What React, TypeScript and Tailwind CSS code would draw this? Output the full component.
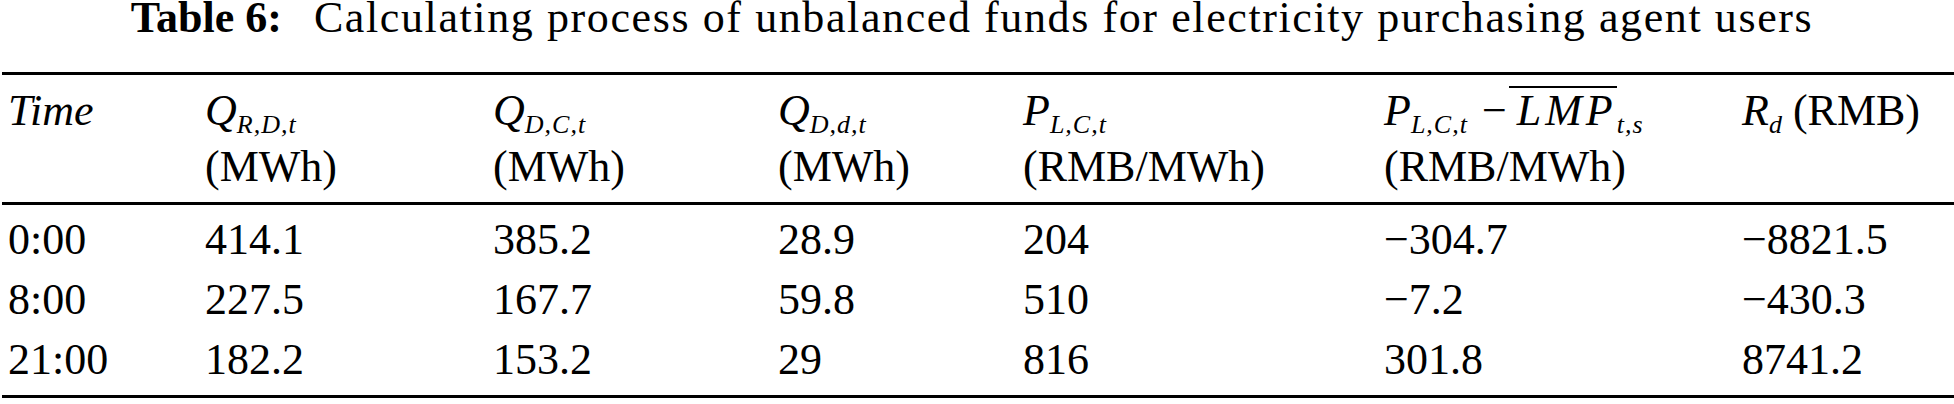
import React from "react";

const cols = "grid grid-cols-[203px_288px_285px_245px_361px_358px_212px]";

function Sub({ children }: { children: React.ReactNode }) {
  return (
    <span className="relative top-[8px] text-[26px] italic leading-none tracking-[1px]">
      {children}
    </span>
  );
}

const rows = [
  ["0:00", "414.1", "385.2", "28.9", "204", "\u2212304.7", "\u22128821.5"],
  ["8:00", "227.5", "167.7", "59.8", "510", "\u22127.2", "\u2212430.3"],
  ["21:00", "182.2", "153.2", "29", "816", "301.8", "8741.2"],
];

export default function App() {
  return (
    <div
      className="w-[1954px] h-[404px] bg-white text-black overflow-hidden"
      style={{ fontFamily: '"Liberation Serif", "Times New Roman", serif' }}
    >
      <div className="h-[72px] pr-[10px] text-center text-[44px] leading-[36px] whitespace-nowrap">
        <span className="font-bold">Table 6:</span>
        <span className="inline-block w-[32px]" />
        <span className="tracking-[1.6px]">
          Calculating process of unbalanced funds for electricity purchasing agent users
        </span>
      </div>
      <div className="ml-[2px] w-[1952px]">
        <div className="border-t-[3px] border-black" />
        <div className={`${cols} text-[44px] leading-[56px] pt-[8px] pb-[7px] whitespace-nowrap`}>
          <div className="pl-[6px]">
            <i>Time</i>
          </div>
          <div className="flex flex-col">
            <span>
              <i>Q</i>
              <Sub>R,D,t</Sub>
            </span>
            <span>(MWh)</span>
          </div>
          <div className="flex flex-col">
            <span>
              <i>Q</i>
              <Sub>D,C,t</Sub>
            </span>
            <span>(MWh)</span>
          </div>
          <div className="flex flex-col">
            <span>
              <i>Q</i>
              <Sub>D,d,t</Sub>
            </span>
            <span>(MWh)</span>
          </div>
          <div className="flex flex-col">
            <span>
              <i>P</i>
              <Sub>L,C,t</Sub>
            </span>
            <span>(RMB/MWh)</span>
          </div>
          <div className="flex flex-col">
            <span>
              <i>P</i>
              <Sub>L,C,t</Sub>
              <span className="ml-[14px] mr-[10px]">{"\u2212"}</span>
              <span className="relative">
                <span className="absolute left-[-8px] right-0 top-0 h-[2px] bg-black" />
                <i className="tracking-[4px]">LMP</i>
              </span>
              <Sub>t,s</Sub>
            </span>
            <span>(RMB/MWh)</span>
          </div>
          <div>
            <span>
              <i>R</i>
              <Sub>d</Sub>
              <span className="ml-[10px]">(RMB)</span>
            </span>
          </div>
        </div>
        <div className="border-t-[3px] border-black" />
        <div className="pt-[5px] pb-[5px] text-[44px] leading-[60px]">
          {rows.map((r) => (
            <div key={r[0]} className={`${cols} whitespace-nowrap`}>
              {r.map((c, i) => (
                <div key={i} className={i === 0 ? "pl-[6px]" : ""}>
                  {c}
                </div>
              ))}
            </div>
          ))}
        </div>
        <div className="border-t-[3px] border-black" />
      </div>
    </div>
  );
}
